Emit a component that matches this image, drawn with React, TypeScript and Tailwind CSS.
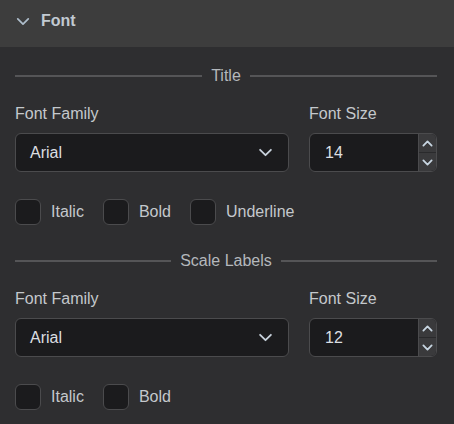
import React from "react";

const font = { fontFamily: '"Liberation Sans", Arial, sans-serif' };

function Chevron({ className, up, sw = 2 }: { className?: string; up?: boolean; sw?: number }) {
  return (
    <svg className={className} viewBox="0 0 16 10" fill="none" stroke="currentColor" strokeWidth={sw} strokeLinecap="round" strokeLinejoin="round">
      {up ? <path d="M2 8 L8 2 L14 8" /> : <path d="M2 2 L8 8 L14 2" />}
    </svg>
  );
}

function Divider({ label }: { label: string }) {
  return (
    <div className="flex items-center h-[20px]">
      <div className="flex-1 h-[2px] bg-[#555557]" />
      <span className="px-[9px] text-[16px] text-[#b4b8bc] leading-[20px]">{label}</span>
      <div className="flex-1 h-[2px] bg-[#555557]" />
    </div>
  );
}

function Checkbox({ label }: { label: string }) {
  return (
    <div className="flex items-center gap-[10px]">
      <div className="w-[26px] h-[26px] rounded-[6px] border border-[#4b4b4d] bg-[#1b1b1d]" />
      <span className="text-[16px] text-[#c4c8cc]">{label}</span>
    </div>
  );
}

function Fields({ size }: { size: string }) {
  return (
    <div className="flex gap-[20px]">
      <div className="w-[274px] flex flex-col">
        <div className="h-[20px] leading-[20px] text-[16px] text-[#c4c8cc]">Font Family</div>
        <div className="mt-[9px] h-[39px] rounded-[6px] border border-[#4b4b4d] bg-[#1b1b1d] flex items-center justify-between pl-[14px] pr-[15px]">
          <span className="text-[16px] text-[#dcdfe2]">Arial</span>
          <Chevron className="w-[15px] h-[9px] text-[#c8d2dc]" />
        </div>
      </div>
      <div className="w-[128px] flex flex-col">
        <div className="h-[20px] leading-[20px] text-[16px] text-[#c4c8cc]">Font Size</div>
        <div className="mt-[9px] h-[39px] rounded-[6px] border border-[#4b4b4d] bg-[#1b1b1d] flex items-stretch overflow-hidden">
          <div className="flex-1 flex items-center pl-[15px] text-[16px] text-[#dcdfe2]">{size}</div>
          <div className="w-[18px] flex flex-col bg-[#3a3a3c] border-l border-[#4b4b4d]">
            <div className="flex-1 flex items-center justify-center border-b border-[#2a2a2c]">
              <Chevron up sw={2.6} className="w-[11px] h-[7px] text-[#c8d6e2]" />
            </div>
            <div className="flex-1 flex items-center justify-center">
              <Chevron sw={2.6} className="w-[11px] h-[7px] text-[#c8d6e2]" />
            </div>
          </div>
        </div>
      </div>
    </div>
  );
}

export default function App() {
  return (
    <div style={font} className="w-[454px] h-[424px] bg-[#2e2e30] overflow-hidden">
      <div className="h-[47px] bg-[#3d3d3d] flex items-start pt-[11px] pl-[16px] gap-[11px]">
        <div className="h-[20px] flex items-center">
          <Chevron className="w-[14px] h-[9px] text-[#aebdcb]" />
        </div>
        <span className="text-[16px] leading-[20px] font-bold text-[#c2cad2]">Font</span>
      </div>
      <div className="pl-[15px] pr-[17px] pt-[19px] flex flex-col">
        <Divider label="Title" />
        <div className="mt-[18px]">
          <Fields size="14" />
        </div>
        <div className="mt-[27px] flex gap-[19px]">
          <Checkbox label="Italic" />
          <Checkbox label="Bold" />
          <Checkbox label="Underline" />
        </div>
        <div className="mt-[26px]">
          <Divider label="Scale Labels" />
        </div>
        <div className="mt-[18px]">
          <Fields size="12" />
        </div>
        <div className="mt-[27px] flex gap-[19px]">
          <Checkbox label="Italic" />
          <Checkbox label="Bold" />
        </div>
      </div>
    </div>
  );
}
